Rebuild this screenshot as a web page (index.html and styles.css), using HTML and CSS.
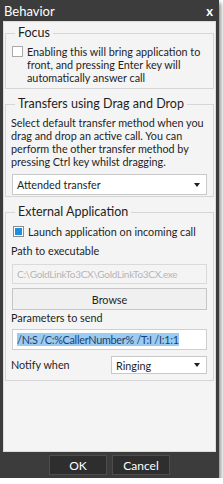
FILE: index.html
```html
<!DOCTYPE html>
<html>
<head>
<meta charset="utf-8">
<link rel="stylesheet" href="styles.css">
</head>
<body>
<div class="dialog">
  <div class="titlebar">
    <span class="title">Behavior</span>
    <span class="close">x</span>
  </div>
  <div class="panel">
    <fieldset class="group focus">
      <legend>Focus</legend>
      <div class="check-row">
        <span class="box"></span>
        <span class="check-text">Enabling this will bring application to front, and pressing Enter key will automatically answer call</span>
      </div>
    </fieldset>
    <fieldset class="group transfers">
      <legend>Transfers using Drag and Drop</legend>
      <p class="desc">Select default transfer method when you drag and drop an active call. You can perform the other transfer method by pressing Ctrl key whilst dragging.</p>
      <div class="select wide"><span>Attended transfer</span><span class="caret"></span></div>
    </fieldset>
    <fieldset class="group external">
      <legend>External Application</legend>
      <div class="check-row single">
        <span class="box checked"></span>
        <span class="check-text">Launch application on incoming call</span>
      </div>
      <div class="label path-label">Path to executable</div>
      <div class="field disabled path">C:\GoldLinkTo3CX\GoldLinkTo3CX.exe</div>
      <div class="button">Browse</div>
      <div class="label params-label">Parameters to send</div>
      <div class="field params"><span class="sel">/N:S /C:%CallerNumber% /T:I /I:1:1</span></div>
      <div class="notify-row">
        <span class="label">Notify when</span>
        <div class="select small"><span>Ringing</span><span class="caret"></span></div>
      </div>
    </fieldset>
  </div>
  <div class="footer">
    <div class="dbtn ok">OK</div>
    <div class="dbtn cancel">Cancel</div>
  </div>
</div>
</body>
</html>
```

FILE: styles.css
```css
* { box-sizing: border-box; }
html, body { margin: 0; padding: 0; background: #ffffff; }
body { font-family: Lato, "Noto Sans", sans-serif; font-size: 10.8px; color: #1e1e1e; }

.dialog {
  width: 219px;
  height: 478px;
  background: #3c3c3c;
  display: flex;
  flex-direction: column;
  box-shadow: 2px 3px 4px rgba(0,0,0,0.45);
}
.titlebar {
  height: 21px;
  flex: none;
  display: flex;
  align-items: center;
  justify-content: space-between;
  padding: 0 6px 0 4px;
  color: #ffffff;
  font-size: 13px;
}
.close { font-size: 13px; font-weight: bold; }

.panel {
  flex: 1;
  margin: 0 3px;
  background: #f4f4f4;
  border: 1px solid #dcdcdc;
  padding: 3px 1px 0 1px;
  display: flex;
  flex-direction: column;
}

.group {
  margin: 0 0 7px 0;
  padding: 0 6px 0 5px;
  border: 1px solid #d6d6d6;
  min-width: 0;
}
.group legend {
  font-size: 12.5px;
  line-height: 16px;
  padding: 0 3px;
  margin-left: 4px;
  color: #1e1e1e;
}

.check-row { display: flex; align-items: flex-start; gap: 4px; line-height: 13px; padding: 4px 0 4px 1px; }
.check-row.single { padding: 5px 0 0 2px; }
.box {
  flex: none;
  width: 11px; height: 11px;
  margin-top: 1px;
  border: 1px solid #a9a9a9;
  background: #ffffff;
}
.box.checked { background: #1e8fe0; border: 1px solid #8a8a8a; box-shadow: inset 0 0 0 1px #ffffff; }

.desc { margin: 4px 0 6px 0; line-height: 13px; }

.select {
  height: 21px;
  background: #ffffff;
  border: 1px solid #c9c9c9;
  display: flex;
  align-items: center;
  justify-content: space-between;
  padding: 0 6px 0 4px;
}
.select.wide { margin: 0 0 1px 1px; }
.caret {
  width: 0; height: 0;
  border-left: 3px solid transparent;
  border-right: 3px solid transparent;
  border-top: 4px solid #1e1e1e;
}

.label { line-height: 14px; padding-top: 3px; }
.path-label { padding-top: 6px; }
.params-label { padding-top: 1px; }
.field {
  height: 20px;
  margin: 4px 0 0 1px;
  border: 1px solid #cfcfcf;
  background: #ffffff;
  display: flex;
  align-items: center;
  padding: 0 4px;
  white-space: nowrap;
  overflow: hidden;
}
.field.path { margin-top: 6px; font-size: 10px; letter-spacing: -0.3px; }
.field.params { height: 21px; letter-spacing: -0.25px; }
.field.disabled { background: #f4f4f4; color: #b4b4b4; border-color: #dadada; }
.sel { background: #9ccbf0; color: #1a3f74; }

.button {
  height: 22px;
  margin: 4px 0 0 1px;
  border: 1px solid #c6c6c6;
  background: #f0f0f0;
  display: flex;
  align-items: center;
  justify-content: center;
}
.notify-row { display: flex; align-items: center; justify-content: space-between; margin: 6px 0 6px 0; }
.notify-row .label { padding: 0; }
.select.small { width: 96px; height: 18px; }

.footer {
  height: 26px;
  flex: none;
  display: flex;
  justify-content: center;
  align-items: center;
  gap: 5px;
  padding-left: 0;
}
.dbtn {
  width: 58px;
  height: 20px;
  background: #2e2e2e;
  border: 1px solid #4d4d4d;
  color: #ffffff;
  font-size: 12px;
  display: flex;
  align-items: center;
  justify-content: center;
}
```
